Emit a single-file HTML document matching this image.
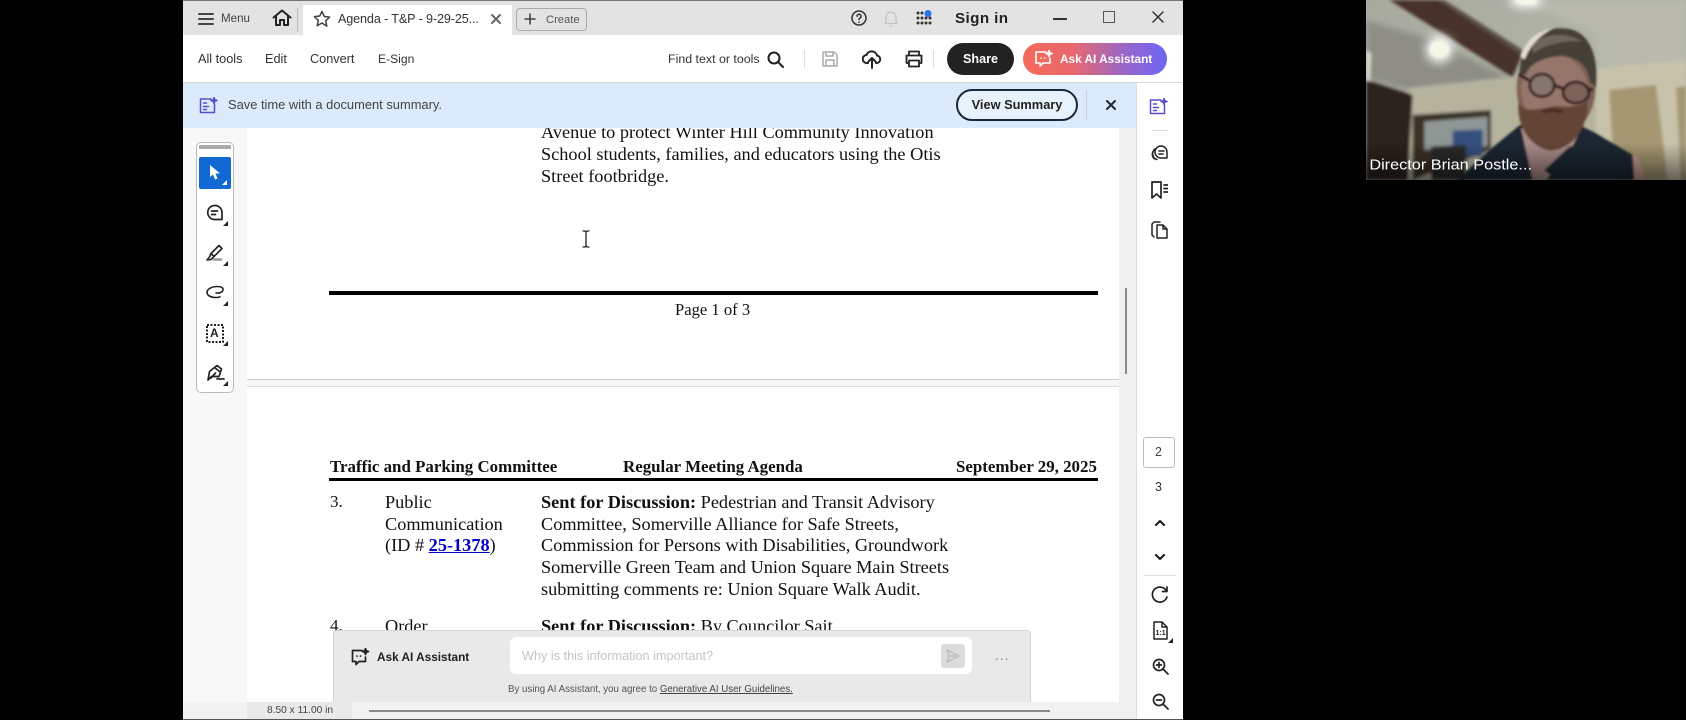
<!DOCTYPE html>
<html><head><meta charset="utf-8"><style>
html,body{margin:0;padding:0;background:#000;width:1686px;height:720px;overflow:hidden}
*{box-sizing:border-box}
body{font-family:"Liberation Sans",sans-serif;position:relative}
.a,.t,svg.i{position:absolute}
.t{white-space:nowrap;line-height:20px}
.s{font-family:"Liberation Serif",serif;font-size:18.3px;color:#111}
.h{font-size:16.9px}
svg.i{fill:none;stroke:#222;stroke-width:1.6;stroke-linecap:round;stroke-linejoin:round}
.tri{position:absolute;width:0;height:0;border-left:5px solid transparent;border-bottom:5px solid #222}
</style></head><body>
<div class="a" id="app" style="left:183px;top:0;width:1000px;height:720px;background:#fff;overflow:hidden"></div>

<!-- doc area -->
<div class="a" style="left:183px;top:128px;width:64px;height:592px;background:#f8f8f8"></div>
<div class="a" style="left:247px;top:128px;width:872px;height:592px;background:#fff"></div>
<div class="a" style="left:247px;top:379px;width:872px;height:8px;background:#f7f7f7;border-top:1px solid #cfcfcf;border-bottom:1px solid #dedede"></div>
<div class="a" style="left:1119px;top:128px;width:17px;height:592px;background:#f0f0f0"></div>
<div class="a" style="left:1125px;top:288px;width:2px;height:86px;background:#8a8a8a"></div>

<div class="t s" style="left:541px;top:122px">Avenue to protect Winter Hill Community Innovation</div>
<div class="t s" style="left:541px;top:144px">School students, families, and educators using the Otis</div>
<div class="t s" style="left:541px;top:166px">Street footbridge.</div>
<div class="a" style="left:329px;top:291px;width:769px;height:4px;background:#000"></div>
<div class="t s h" style="left:675px;top:300px;font-size:16.6px">Page 1 of 3</div>

<svg class="i" style="left:580px;top:230px;stroke-width:1.3;stroke:#222" width="12" height="18" viewBox="0 0 12 18"><path d="M3 1h2l1 1 1-1h2M6 2v14M3 17h2l1-1 1 1h2"/></svg>

<div class="t s h" style="left:330px;top:457px;font-weight:bold">Traffic and Parking Committee</div>
<div class="t s h" style="left:623px;top:457px;font-weight:bold">Regular Meeting Agenda</div>
<div class="t s h" style="left:956px;top:457px;font-weight:bold">September 29, 2025</div>
<div class="a" style="left:329px;top:478px;width:769px;height:3px;background:#000"></div>

<div class="t s" style="left:330px;top:492px;font-size:17.1px">3.</div>
<div class="t s" style="left:385px;top:492px">Public</div>
<div class="t s" style="left:385px;top:514px">Communication</div>
<div class="t s" style="left:385px;top:535px">(ID # <b style="color:#0000c8;text-decoration:underline">25-1378</b>)</div>
<div class="t s" style="left:541px;top:492px"><b>Sent for Discussion:</b> Pedestrian and Transit Advisory</div>
<div class="t s" style="left:541px;top:514px">Committee, Somerville Alliance for Safe Streets,</div>
<div class="t s" style="left:541px;top:535px">Commission for Persons with Disabilities, Groundwork</div>
<div class="t s" style="left:541px;top:557px">Somerville Green Team and Union Square Main Streets</div>
<div class="t s" style="left:541px;top:579px">submitting comments re: Union Square Walk Audit.</div>
<div class="t s" style="left:330px;top:616px;font-size:17.1px">4.</div>
<div class="t s" style="left:385px;top:616px">Order</div>
<div class="t s" style="left:541px;top:616px"><b>Sent for Discussion:</b> By Councilor Sait</div>

<!-- title bar -->
<div class="a" style="left:183px;top:0;width:1000px;height:35px;background:#e3e3e3;border-top:1px solid #777"></div>
<svg class="i" style="left:198px;top:12px;stroke:#444;stroke-width:2" width="16" height="14" viewBox="0 0 16 14"><path d="M1 2h14M1 7h14M1 12h14"/></svg>
<div class="t" style="left:221px;top:9px;font-size:11.6px;color:#444">Menu</div>
<svg class="i" style="left:272px;top:9px;stroke-width:2" width="20" height="18" viewBox="0 0 20 18"><path d="M1.500 8.500 10 1.500l8.500 7M4 7v9h4v-5h4v5h4V7"/></svg>
<div class="a" style="left:297px;top:8px;width:1px;height:24px;background:#bbb"></div>
<div class="a" style="left:303px;top:5px;width:209px;height:30px;background:#fff"></div>
<svg class="i" style="left:313px;top:10px;stroke:#444;stroke-width:1.5" width="18" height="18" viewBox="0 0 18 18"><path d="M9 1.500l2.300 5 5.400.6-4 3.700 1.100 5.400L9 13l-4.800 2.700 1.100-5.400-4-3.700 5.400-.6z"/></svg>
<div class="t" style="left:338px;top:9px;font-size:12.6px;color:#333;letter-spacing:-.12px">Agenda - T&amp;P - 9-29-25...</div>
<svg class="i" style="left:491px;top:14px;stroke:#666;stroke-width:2" width="10" height="10" viewBox="0 0 10 10"><path d="M1 1l8 8M9 1l-8 8"/></svg>
<div class="a" style="left:516px;top:8px;width:71px;height:23px;border:1px solid #aaa;border-radius:4px"></div>
<svg class="i" style="left:524px;top:13px;stroke:#444;stroke-width:1.6" width="12" height="12" viewBox="0 0 12 12"><path d="M6 1v10M1 6h10"/></svg>
<div class="t" style="left:546px;top:10px;font-size:11.2px;color:#555">Create</div>

<svg class="i" style="left:851px;top:10px;stroke:#333;stroke-width:1.5" width="16" height="16" viewBox="0 0 16 16"><circle cx="8" cy="8" r="7"/><path d="M6 6.300a2 2 0 1 1 3 1.700c-.7.400-1 .8-1 1.500M8 12v.2"/></svg>
<svg class="i" style="left:884px;top:10px;stroke:#c4c4c4;stroke-width:1.3" width="14" height="17" viewBox="0 0 14 17"><path d="M2 12V7a5 5 0 0 1 10 0v5l1 1.500H1zM6 16h2"/></svg>
<svg class="i" style="left:916px;top:10px;stroke:none;fill:#333" width="17" height="16" viewBox="0 0 17 16"><g><circle cx="2" cy="3" r="1.500"/><circle cx="6" cy="3" r="1.500"/><circle cx="2" cy="8" r="1.500"/><circle cx="6" cy="8" r="1.500"/><circle cx="10" cy="8" r="1.500"/><circle cx="2" cy="13" r="1.500"/><circle cx="6" cy="13" r="1.500"/><circle cx="10" cy="13" r="1.500"/><circle cx="14" cy="13" r="1.500"/><circle cx="14" cy="8" r="1.500"/></g><circle cx="12" cy="3.500" r="3.500" fill="#2a73e0"/></svg>
<div class="t" style="left:955px;top:9px;font-size:15.2px;font-weight:bold;color:#222;letter-spacing:.4px">Sign in</div>
<div class="a" style="left:1053px;top:18px;width:14px;height:1.500px;background:#333"></div>
<div class="a" style="left:1103px;top:11px;width:12px;height:12px;border:1.500px solid #555"></div>
<svg class="i" style="left:1152px;top:11px;stroke:#333;stroke-width:1.500" width="12" height="12" viewBox="0 0 12 12"><path d="M1 1l10 10M11 1 1 11"/></svg>

<!-- toolbar -->
<div class="a" style="left:183px;top:82px;width:1000px;height:1px;background:#d6d6d6"></div>
<div class="t" style="left:198px;top:49px;font-size:12.7px;color:#333">All tools</div>
<div class="t" style="left:265px;top:49px;font-size:12.7px;color:#333">Edit</div>
<div class="t" style="left:310px;top:49px;font-size:12.7px;color:#333">Convert</div>
<div class="t" style="left:378px;top:49px;font-size:12.1px;color:#333">E-Sign</div>
<div class="t" style="left:668px;top:49px;font-size:12.4px;color:#333">Find text or tools</div>
<svg class="i" style="left:767px;top:51px;stroke-width:2" width="17" height="17" viewBox="0 0 17 17"><circle cx="7" cy="7" r="5.500"/><path d="M11 11l5 5"/></svg>
<div class="a" style="left:804px;top:50px;width:1px;height:18px;background:#ddd"></div>
<svg class="i" style="left:822px;top:51px;stroke:#aaa;stroke-width:1.500" width="16" height="16" viewBox="0 0 16 16"><path d="M1 1h11l3 3v11H1zM4 1v4h7V1M4 15V9h8v6"/></svg>
<svg class="i" style="left:862px;top:50px;stroke-width:2" width="20" height="19" viewBox="0 0 20 19"><path d="M6 13H5a4 4 0 0 1-.5-8A5.500 5.500 0 0 1 15 5.500 3.800 3.800 0 0 1 15 13h-1M10 18V9M6.500 11.500 10 8l3.500 3.500"/></svg>
<svg class="i" style="left:905px;top:50px;stroke-width:1.800" width="18" height="18" viewBox="0 0 18 18"><path d="M4 5V1.500h10V5M4 13H1.500V5.500h15V13H14M4 10.500h10v6H4z"/></svg>
<div class="a" style="left:933px;top:50px;width:1px;height:18px;background:#ddd"></div>
<div class="a" style="left:947px;top:43px;width:67px;height:32px;background:#222;border-radius:16px;color:#fff;font-size:12.6px;font-weight:bold;text-align:center;line-height:32px">Share</div>
<div class="a" style="left:1023px;top:43px;width:144px;height:32px;border-radius:16px;background:linear-gradient(90deg,#f5695a 0%,#e8686e 35%,#9a66c8 70%,#6a66f5 100%)"></div>
<svg class="i" style="left:1034px;top:50px;stroke:#fff;stroke-width:1.600" width="20" height="18" viewBox="0 0 20 18"><path d="M12 2H2v11h4v3l3-3h7V8M7 8v.1M10.500 8v.1"/><path d="M15 0.500l.8 2.200 2.200.8-2.200.8-.8 2.200-.8-2.200-2.200-.8 2.200-.8z" fill="#fff"/></svg>
<div class="t" style="left:1060px;top:49px;font-size:11.8px;font-weight:bold;color:#fff">Ask AI Assistant</div>

<!-- banner -->
<div class="a" style="left:183px;top:83px;width:953px;height:45px;background:#dcebfb"></div>
<svg class="i" style="left:199px;top:97px;stroke:#5a4fc8;stroke-width:1.500" width="19" height="17" viewBox="0 0 19 17"><path d="M12 2H1.500v13.500h14V7M4.500 6h3M4.500 9.500h5M4.500 12.500h3"/><path d="M15 .5l.8 2.200 2.200.8-2.200.8-.8 2.200-.8-2.200-2.200-.8 2.200-.8z" fill="#5a4fc8"/></svg>
<div class="t" style="left:228px;top:95px;font-size:12.9px;color:#444">Save time with a document summary.</div>
<div class="a" style="left:956px;top:89px;width:122px;height:32px;border:2px solid #16283a;border-radius:16px;background:#e8f2fc;color:#222;font-size:12.800px;font-weight:bold;text-align:center;line-height:28px">View Summary</div>
<div class="a" style="left:1086px;top:90px;width:1px;height:30px;background:#c6d4e4"></div>
<svg class="i" style="left:1106px;top:100px;stroke:#1b2a3a;stroke-width:2" width="10" height="10" viewBox="0 0 10 10"><path d="M1 1l8 8M9 1l-8 8"/></svg>

<!-- right panel -->
<div class="a" style="left:1136px;top:83px;width:47px;height:637px;background:#fff;border-left:1px solid #ddd"></div>
<svg class="i" style="left:1149px;top:98px;stroke:#5a4fc8;stroke-width:1.500" width="19" height="17" viewBox="0 0 19 17"><path d="M12 2H1.500v13.500h14V7M4.500 6h3M4.500 9.500h5M4.500 12.500h3"/><path d="M15 .5l.8 2.200 2.200.8-2.200.8-.8 2.200-.8-2.200-2.200-.8 2.200-.8z" fill="#5a4fc8"/></svg>
<div class="a" style="left:1152px;top:130px;width:16px;height:1px;background:#ddd"></div>
<svg class="i" style="left:1150px;top:144px;stroke-width:1.500" width="18" height="17" viewBox="0 0 18 17"><path d="M11 2a6 6 0 0 1 6 6v6h-6a6 6 0 0 1 0-12zM9 7h5M9 10h4M5 5a6 6 0 0 0 2 10.500M3 8a5 5 0 0 0 2 7"/></svg>
<svg class="i" style="left:1150px;top:181px;stroke-width:1.700" width="18" height="18" viewBox="0 0 18 18"><path d="M2 1h9v16l-4.500-4L2 17zM14 4h4M14 7.500h4M14 11h4"/></svg>
<svg class="i" style="left:1150px;top:221px;stroke-width:1.500" width="18" height="19" viewBox="0 0 18 19"><path d="M7 4h6l4 4v9H7zM13 4v4h4M4 16 2 14V3l2-2h6"/></svg>

<div class="a" style="left:1143px;top:437px;width:32px;height:31px;border:1px solid #bbb;border-radius:3px"></div>
<div class="t" style="left:1155px;top:442px;font-size:12.500px;color:#444">2</div>
<div class="t" style="left:1155px;top:477px;font-size:12.500px;color:#333">3</div>
<svg class="i" style="left:1154px;top:519px;stroke-width:2.200" width="12" height="8" viewBox="0 0 12 8"><path d="M2 6l4-4 4 4"/></svg>
<svg class="i" style="left:1154px;top:553px;stroke-width:2.200" width="12" height="8" viewBox="0 0 12 8"><path d="M2 2l4 4 4-4"/></svg>
<div class="a" style="left:1144px;top:575px;width:32px;height:1px;background:#ddd"></div>
<svg class="i" style="left:1151px;top:586px;stroke-width:1.700" width="18" height="18" viewBox="0 0 18 18"><path d="M15.500 5A7.500 7.500 0 1 0 16 11M16 1v4.500h-4.500"/></svg>
<svg class="i" style="left:1152px;top:621px;stroke-width:1.500" width="16" height="19" viewBox="0 0 16 19"><path d="M2 1h8l5 5v12H2zM10 1v5h5"/><text x="3.500" y="14" font-size="7" font-weight="bold" fill="#222" stroke="none" font-family="Liberation Sans">1:1</text></svg>
<div class="tri" style="left:1168px;top:638px"></div>
<svg class="i" style="left:1152px;top:658px;stroke-width:1.700" width="17" height="17" viewBox="0 0 17 17"><circle cx="7" cy="7" r="5.500"/><path d="M11 11l5 5M4.500 7h5M7 4.500v5"/></svg>
<svg class="i" style="left:1152px;top:693px;stroke-width:1.700" width="17" height="17" viewBox="0 0 17 17"><circle cx="7" cy="7" r="5.500"/><path d="M11 11l5 5M4.500 7h5"/></svg>

<!-- left tools -->
<div class="a" style="left:196px;top:142px;width:38px;height:251px;background:#fff;border:1px solid #bbb;border-radius:5px"></div>
<div class="a" style="left:199px;top:145px;width:32px;height:4px;background:#aaa;border-radius:1px"></div>
<div class="a" style="left:199px;top:157px;width:32px;height:32px;background:#1269d3;border-radius:2px"></div>
<svg class="i" style="left:209px;top:165px;stroke:none;fill:#fff" width="12" height="16" viewBox="0 0 12 16"><path d="M1 0v12l3-2.500 2 5 2.500-1-2-5H11z"/></svg>
<div class="tri" style="left:222px;top:180px;border-bottom-color:#fff"></div>
<svg class="i" style="left:206px;top:204px;stroke-width:1.700" width="18" height="18" viewBox="0 0 18 18"><path d="M8.500 1.500a7 7 0 0 1 7.500 7v7H9a7 7 0 0 1-.5-14zM5.500 7h6M5.500 10.500h4"/></svg>
<div class="tri" style="left:223px;top:221px"></div>
<svg class="i" style="left:206px;top:244px;stroke-width:1.600" width="18" height="18" viewBox="0 0 18 18"><path d="M13 1.500l3 3-8 8-3-3zM5 9.500 3.500 13l-2.500 3 4-.5 2-2"/><path d="M8 15.500h7" stroke="#999" stroke-width="2.500"/></svg>
<div class="tri" style="left:223px;top:261px"></div>
<svg class="i" style="left:206px;top:285px;stroke-width:1.600" width="18" height="15" viewBox="0 0 18 15"><path d="M17 4.500C17 2 14 1.500 11 1.500 6 1.500 1 4 1 7.500c0 3 4 5 9 5 1.500 0 3-.2 4-.7M17 4.500c0 2.500-3.500 4-7 3.500"/></svg>
<div class="tri" style="left:223px;top:301px"></div>
<svg class="i" style="left:206px;top:324px;stroke-width:2;stroke-dasharray:2 1.500;stroke-linecap:butt" width="18" height="19" viewBox="0 0 18 19"><rect x="1" y="1" width="16" height="17"/></svg>
<div class="t" style="left:210px;top:323px;font-size:12px;font-weight:bold;color:#222">A</div>
<div class="tri" style="left:223px;top:341px"></div>
<svg class="i" style="left:206px;top:364px;stroke-width:1.700" width="20" height="19" viewBox="0 0 20 19"><path d="M11 1.500l4.500 3.500-2.500 7.500H5.500L2 16 3.500 7.500zM5 14l4.500-5M11 15c1.500-1.500 2.500 1 4.500 0 1-.5 1.500-.5 2.500 0"/><path d="M8.500 3.500l5 4" /></svg>
<div class="tri" style="left:223px;top:381px"></div>

<!-- AI assistant -->
<div class="a" style="left:333px;top:630px;width:698px;height:72px;background:#e9e9e9;border:1px solid #d4d4d4;border-bottom:0;border-radius:4px 4px 0 0"></div>
<svg class="i" style="left:351px;top:648px;stroke-width:1.700" width="19" height="18" viewBox="0 0 19 18"><path d="M11 2.500H1.500v11h3.500v3l3-3h6.500V9M6 8v.1M9.500 8v.1"/><path d="M14.500.5l.8 2.200 2.200.8-2.200.8-.8 2.200-.8-2.200-2.200-.8 2.200-.8z" fill="#222"/></svg>
<div class="t" style="left:377px;top:647px;font-size:11.8px;font-weight:bold;color:#222">Ask AI Assistant</div>
<div class="a" style="left:510px;top:637px;width:462px;height:37px;background:#fff;border-radius:6px"></div>
<div class="t" style="left:522px;top:646px;font-size:12.7px;color:#c4c4c4">Why is this information important?</div>
<div class="a" style="left:941px;top:644px;width:24px;height:24px;background:#dcdcdc;border-radius:3px"></div>
<svg class="i" style="left:946px;top:649px;stroke:#bdbdbd;stroke-width:1.500" width="14" height="14" viewBox="0 0 14 14"><path d="M1 1l12 6-12 6 2-6zM3 7h6"/></svg>
<div class="t" style="left:995px;top:645px;font-size:14px;color:#888;letter-spacing:1px">...</div>
<div class="t" style="left:508px;top:680px;font-size:9.7px;color:#555">By using AI Assistant, you agree to <span style="text-decoration:underline;color:#444">Generative AI User Guidelines.</span></div>

<!-- status bar -->
<div class="a" style="left:183px;top:702px;width:936px;height:18px;background:#f2f2f2"></div>
<div class="a" style="left:247px;top:702px;width:105px;height:18px;background:#e9e9e9"></div>
<div class="t" style="left:267px;top:701px;font-size:10.2px;color:#444">8.50 x 11.00 in</div>
<div class="a" style="left:369px;top:710px;width:681px;height:2px;background:#8a8a8a"></div>
<div class="a" style="left:183px;top:719px;width:1000px;height:1px;background:#555"></div>

<!-- video -->
<svg class="a" style="left:1366px;top:0" width="320" height="180" viewBox="0 0 960 540">
<defs>
<filter id="b"><feGaussianBlur stdDeviation="5"/></filter>
<filter id="b2"><feGaussianBlur stdDeviation="14"/></filter>
<filter id="b3"><feGaussianBlur stdDeviation="3"/></filter>
<filter id="b4"><feGaussianBlur stdDeviation="10"/></filter>
<linearGradient id="c" x1="0" y1="0" x2="1" y2="1"><stop offset="0" stop-color="#a8aaa0"/><stop offset="1" stop-color="#bcbcb0"/></linearGradient>
<linearGradient id="l" x1="0" y1="0" x2="0" y2="1"><stop offset="0" stop-color="#000" stop-opacity="0"/><stop offset="1" stop-color="#000" stop-opacity=".5"/></linearGradient>
</defs>
<rect width="960" height="540" fill="url(#c)"/>
<g filter="url(#b4)"><polygon points="0,60 170,110 440,235 130,270 0,240" fill="#8e8e86"/><polygon points="460,0 960,0 960,190 700,215 690,100" fill="#b9b9ad"/></g>
<g filter="url(#b)">
<polygon points="130,265 450,232 700,215 960,185 960,540 130,540" fill="#b5b39d"/>
<polygon points="690,205 960,180 960,540 690,540" fill="#c7c3aa"/>
<polygon points="0,150 16,160 12,250 0,250" fill="#d8d8cc"/>
<polygon points="0,240 140,285 125,540 0,540" fill="#2a221e"/>
<polygon points="140,345 375,330 375,450 140,540" fill="#3a3026"/>
<polygon points="175,365 365,350 365,440 175,450" fill="#8f9696"/>
<polygon points="260,392 350,388 350,470 260,470" fill="#34507e"/>
<polygon points="195,440 300,435 300,540 195,540" fill="#2a2a2a"/>
<polygon points="70,0 215,0 470,160 440,232" fill="#46302a"/>
<polygon points="215,0 235,0 470,150 470,168" fill="#5a4f46"/>
<polygon points="730,270 870,255 905,540 745,540" fill="#a59771"/>
<polygon points="930,262 960,258 960,540 945,540" fill="#a59771"/>
</g>
<g filter="url(#b2)"><circle cx="220" cy="148" r="42" fill="#fff" opacity=".85"/><ellipse cx="480" cy="4" rx="50" ry="18" fill="#fff"/></g>
<ellipse cx="220" cy="148" rx="30" ry="26" fill="#f7f7e8" filter="url(#b)"/>
<ellipse cx="480" cy="2" rx="34" ry="12" fill="#f5f5e8" filter="url(#b)"/>
<g filter="url(#b3)">
<!-- body -->
<polygon points="275,540 370,450 462,375 640,375 690,400 800,465 840,540" fill="#1c2632"/>
<polygon points="465,385 640,395 610,460 540,540 500,540" fill="#a88a88"/>
<polygon points="800,465 815,470 840,540 805,540" fill="#c49a92"/>
<polygon points="535,510 610,440 690,430 640,540 570,540" fill="#1e2530"/>
<!-- head -->
<ellipse cx="570" cy="265" rx="118" ry="145" fill="#7e6154"/>
<ellipse cx="565" cy="270" rx="100" ry="105" fill="#94766a"/>
<!-- hair -->
<path d="M462 225C455 130 530 82 590 85C660 85 700 150 690 262L672 245C668 205 640 172 590 168C540 170 495 185 478 225Z" fill="#453f38"/>
<path d="M500 130C540 100 600 95 650 125C620 120 550 125 500 160Z" fill="#6e675c"/>
<path d="M463 170C478 120 515 92 560 85C525 105 495 130 476 178Z" fill="#e0dccf"/>
<!-- beard -->
<path d="M458 305C470 345 520 325 570 318C612 322 645 320 664 300C668 380 625 445 555 452C495 445 450 380 458 305Z" fill="#644434"/>
<path d="M530 335c20-7 42-5 60 2" stroke="#3e2a20" stroke-width="9" fill="none"/>
</g>
<!-- glasses -->
<g fill="none" stroke="#2a1816" stroke-width="7" filter="url(#b3)">
<ellipse cx="528" cy="256" rx="36" ry="33" fill="#86766e"/>
<ellipse cx="630" cy="278" rx="38" ry="31" fill="#7e6458"/>
<path d="M564 256l28 10M490 242l-30-18M668 272l12-6"/>
</g>
<rect y="430" width="960" height="110" fill="url(#l)"/>
<text x="10" y="509" font-family="Liberation Sans" font-size="44" fill="#fff" textLength="488" lengthAdjust="spacingAndGlyphs">Director Brian Postle...</text>
</svg>
</body></html>
